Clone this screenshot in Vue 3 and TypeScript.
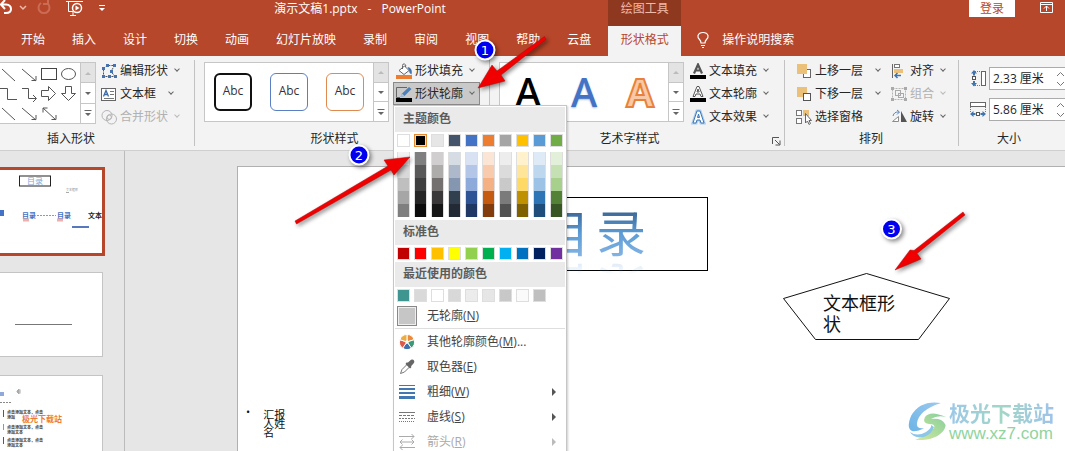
<script setup lang="ts">
import { ref } from 'vue'

interface Cmd { label: string; icon: string; arrow?: boolean; off?: boolean }
interface MenuItem { label: string; key: string; tail?: string; icon: string; sub?: boolean; off?: boolean }

const tabs: string[] = ['开始', '插入', '设计', '切换', '动画', '幻灯片放映', '录制', '审阅', '视图', '帮助', '云盘']

const shapeCmds: Cmd[] = [
  { label: '编辑形状', icon: 'edit', arrow: true },
  { label: '文本框', icon: 'textbox', arrow: true },
  { label: '合并形状', icon: 'merge', arrow: true, off: true },
]
const textCmds: Cmd[] = [
  { label: '文本填充', icon: 'afill', arrow: true },
  { label: '文本轮廓', icon: 'aline', arrow: true },
  { label: '文本效果', icon: 'aglow', arrow: true },
]
const layerCmds: Cmd[] = [
  { label: '上移一层', icon: 'forward', arrow: true },
  { label: '下移一层', icon: 'backward', arrow: true },
  { label: '选择窗格', icon: 'pane' },
]
const arrangeCmds: Cmd[] = [
  { label: '对齐', icon: 'align', arrow: true },
  { label: '组合', icon: 'group', arrow: true, off: true },
  { label: '旋转', icon: 'rotate', arrow: true },
]

const height = ref('2.33 厘米')
const width = ref('5.86 厘米')
const styleBoxes = ['black', 'blue', 'orange']

const scrollers = [
  { label: '向上', d: 'M1 7 4 4 7 7Z' },
  { label: '向下', d: 'M1 4 4 7 7 4Z' },
  { label: '其他', d: 'M.500 2H7.500V3H.500ZM1 5 4 8 7 5Z' },
]

const theme: string[] = ['#ffffff', '#000000', '#e7e6e6', '#44546a', '#4472c4', '#ed7d31', '#a5a5a5', '#ffc000', '#5b9bd5', '#70ad47']
const shades: string[][] = [
  ['#f2f2f2', '#d9d9d9', '#bfbfbf', '#a6a6a6', '#7f7f7f'],
  ['#7f7f7f', '#595959', '#3f3f3f', '#262626', '#0c0c0c'],
  ['#d0cece', '#aeabab', '#757070', '#3a3838', '#171616'],
  ['#d6dce4', '#adb9ca', '#8496b0', '#323f4f', '#222a35'],
  ['#d9e2f3', '#b4c6e7', '#8eaadb', '#2f5496', '#1f3864'],
  ['#fbe5d5', '#f7cbac', '#f4b183', '#c55a11', '#833c0b'],
  ['#ededed', '#dbdbdb', '#c9c9c9', '#7b7b7b', '#525252'],
  ['#fff2cc', '#fee599', '#ffd965', '#bf9000', '#7f6000'],
  ['#deebf6', '#bdd7ee', '#9cc3e5', '#2e75b5', '#1e4e79'],
  ['#e2efd9', '#c5e0b3', '#a8d08d', '#538135', '#375623'],
]
const standard: string[] = ['#c00000', '#ff0000', '#ffc000', '#ffff00', '#92d050', '#00b050', '#00b0f0', '#0070c0', '#002060', '#7030a0']
const recent: string[] = ['#3f9690', '#d9d9d9', '#ffffff', '#d8d8d8', '#ececec', '#e6e6e6', '#c8c8c8', '#fafafa', '#bfbfbf']

const menuItems: MenuItem[] = [
  { label: '其他轮廓颜色', key: 'M', tail: '...', icon: 'wheel' },
  { label: '取色器', key: 'E', icon: 'dropper' },
  { label: '粗细', key: 'W', icon: 'weight', sub: true },
  { label: '虚线', key: 'S', icon: 'dashes', sub: true },
  { label: '箭头', key: 'R', icon: 'arrows', sub: true, off: true },
]

const icons: Record<string, string> = {
  edit: '<path d="M2.5 5.500 6 2.500H13.500L10 8.500 14 13.500H2.500Z" fill="none" stroke="#555" stroke-dasharray="2 1"/><g fill="#4673ad"><rect x="1" y="4" width="3" height="3"/><rect x="5" y="1" width="3" height="3"/><rect x="12" y="1" width="3" height="3"/><rect x="9" y="7" width="3" height="3"/><rect x="13" y="12" width="3" height="3"/><rect x="7" y="12" width="3" height="3"/><rect x="1" y="12" width="3" height="3"/></g>',
  textbox: '<rect x=".5" y="2.500" width="14" height="12" fill="#fff" stroke="#666"/><path d="M2.500 10.500 5 4.500 7.500 10.500M3.500 8.500H6.500" fill="none" stroke="#3c6ba8" stroke-width="1.300"/><path d="M9 5.500H13M9 8.500H13M3 12.500H13" stroke="#777"/>',
  merge: '<circle cx="6" cy="6.500" r="5" fill="none" stroke="#b5b5b5"/><circle cx="10.500" cy="10" r="5" fill="none" stroke="#b5b5b5"/><circle cx="8.200" cy="8.200" r="2.200" fill="none" stroke="#b5b5b5"/>',
  bucket: '<path d="M3 7.500 8.500 3 13 7.500 8 11.500Z" fill="#fff" stroke="#666"/><path d="M6.500 6V2.500Q6.500.5 8.500 1T9.500 4" fill="none" stroke="#666"/><path d="M11.500 4Q17 5 15.500 11.500 13 10.500 13 7.500Z" fill="#3f74b0"/><rect y="12" width="16" height="4" fill="#ed7d31"/>',
  pen: '<path d="M11 1.500H.5V11.500H4" fill="none" stroke="#666"/><path d="M4.500 11 6 7.500 13 1 15.500 3 8.500 10Z" fill="#4c7fb8"/><path d="M4.500 11 6 7.500 8.500 10Z" fill="#a8c4e2"/><rect y="12" width="16" height="4" fill="#000"/>',
  afill: '<path d="M4 10.500 8 1.500 12 10.500M5.500 7.500H10.500" fill="none" stroke="#555" stroke-width="2.200"/><rect y="12" width="16" height="4" fill="#000"/>',
  aline: '<path d="M3 10.500 7 .5H9L13 10.500H11L10 8H6L5 10.500ZM7 6H9.200L8 3Z" fill="#fff" stroke="#555"/><rect y="12" width="16" height="4" fill="#000"/>',
  aglow: '<path d="M3 14 7 2H10L14 14H11L10 11H7L6 14ZM7.500 8.500H9.500L8.500 5Z" fill="#fff" stroke="#a9cbed" stroke-width="3"/><path d="M3 14 7 2H10L14 14H11L10 11H7L6 14ZM7.500 8.500H9.500L8.500 5Z" fill="#fff" stroke="#3f78b5"/>',
  forward: '<rect x="7.500" y="6.500" width="7" height="8" fill="#fff" stroke="#666"/><rect x="1" y="1" width="10" height="10" fill="#ebc17a"/>',
  backward: '<rect x="1" y="1" width="10" height="10" fill="#ebc17a"/><rect x="7.500" y="7.500" width="7" height="7" fill="#fff" stroke="#555"/>',
  pane: '<rect x=".5" y="1.500" width="5" height="5" fill="#fff" stroke="#777"/><rect x=".5" y="9.500" width="5" height="5" fill="#fff" stroke="#777"/><rect x="7" y="1" width="6" height="6" fill="#ebc17a"/><path d="M9.500 4.500V14L11.500 12 13 15.500 14.500 14.500 13 11.500H15.500Z" fill="#fff" stroke="#666"/>',
  align: '<path d="M1.500 1V15" stroke="#666"/><rect x="3.500" y="1.500" width="5" height="3" fill="#fff" stroke="#777"/><rect x="3" y="6" width="9" height="4" fill="#ebc17a"/><path d="M10 12.500H4M6.500 10 4 12.500 6.500 15" fill="none" stroke="#3f74b0" stroke-width="1.500"/>',
  group: '<rect x="1.500" y="2.500" width="13" height="11" fill="none" stroke="#b5b5b5" stroke-dasharray="2 1"/><rect x="4.500" y="4.500" width="5" height="5" fill="none" stroke="#aaa"/><rect x="7.500" y="7.500" width="5" height="4" fill="none" stroke="#aaa"/><g fill="#aaa"><rect y="1" width="3" height="3"/><rect x="13" y="1" width="3" height="3"/><rect y="12" width="3" height="3"/><rect x="13" y="12" width="3" height="3"/></g>',
  rotate: '<path d="M10 2V13H16Z" fill="#555"/><path d="M7.500 7.500V12.500H1.500Z" fill="#fff" stroke="#8c8c8c"/><path d="M2 7Q3 2.500 8 3M6 1 8.500 3 6 5.500" fill="none" stroke="#5b86bd"/>',
  hsize: '<rect x="11.500" y="1.500" width="4" height="14" fill="#fff" stroke="#666"/><path d="M3 1.500H11M3 15.500H11" stroke="#777" stroke-dasharray="1 1"/><rect x="2.500" y="6.500" width="3" height="3" fill="#fff" stroke="#555"/><path d="M4 0 7 3.500H5V5.500H3V3.500H1ZM4 16.500 1 13H3V11H5V13H7Z" fill="#3f74b0"/>',
  wsize: '<rect x=".5" y="1.500" width="15" height="4" fill="#fff" stroke="#666"/><path d="M.5 6V12M15.500 6V12" stroke="#777" stroke-dasharray="1 1"/><rect x="6.500" y="11.500" width="3" height="3" fill="#fff" stroke="#555"/><path d="M0 13 3.500 10V12H5.500V14H3.500V16ZM16 13 12.500 16V14H10.500V12H12.500V10Z" fill="#3f74b0"/>',
  wheel: '<g stroke="#fff"><path d="M8 8V.5A7.500 7.500 0 0 1 15.100 5.700Z" fill="#ed8b3c"/><path d="M8 8 15.100 5.700A7.500 7.500 0 0 1 12.400 14.100Z" fill="#3a9a78"/><path d="M8 8 12.400 14.100A7.500 7.500 0 0 1 3.600 14.100Z" fill="#3f6fad"/><path d="M8 8 3.600 14.100A7.500 7.500 0 0 1 .9 5.700Z" fill="#dd5a49"/><path d="M8 8 .9 5.700A7.500 7.500 0 0 1 8 .5Z" fill="#edac3e"/></g><circle cx="8" cy="8" r="1.800" fill="#fff"/>',
  dropper: '<path d="M1.500 14.500 3 10.500 8.500 5 11 7.500 5.500 13Z" fill="#fff" stroke="#777"/><path d="M7.500 3.500 9 3.500 12 .8Q14 0 15 1.500T14.500 4.500L12.200 7V8.500L11 9.500 6.500 5Z" fill="#666"/>',
  weight: '<path d="M0 1.500H16" stroke="#4377b3"/><path d="M0 5H16" stroke="#4377b3" stroke-width="2"/><path d="M0 9H16" stroke="#4377b3" stroke-width="2"/><path d="M0 13.500H16" stroke="#4377b3" stroke-width="3"/>',
  dashes: '<g stroke="#777"><path d="M0 3.500H16"/><path d="M0 6.500H16" stroke-dasharray="3 1"/><path d="M0 9.500H16" stroke-dasharray="2 1"/><path d="M0 12.500H16" stroke-dasharray="1 1"/></g>',
  arrows: '<path d="M0 2.500H15M12.500 0 15 2.500 12.500 5M1 8H15M3.500 5.500 1 8 3.500 10.500M12.500 5.500 15 8 12.500 10.500M1 13.500H16M3.500 11 1 13.500 3.500 16" fill="none" stroke="#aaa"/>',
}
</script>

<template>
  <div class="app">
    <header class="head">
      <div class="head-left">
        <div class="titlebar">
          <button class="qat" aria-label="撤消"><svg width="14" height="16"><path d="M1 4.500H6Q11 5 11 9T6 13H4M5 0 1 4.500 5 9" fill="none" stroke="#fff" stroke-width="2" /></svg></button>
          <button class="qat" aria-label="撤消列表"><svg width="10" height="16"><path d="M2 6 5 9 8 6" fill="none" stroke="#eab9ac" stroke-width="1.500" /></svg></button>
          <button class="qat redo" aria-label="重做"><svg width="16" height="16"><path d="M5 3A5.500 5.500 0 1 0 11 3M12 0V4H7" fill="none" stroke="#cc6b54" stroke-width="2" /></svg></button>
          <button class="qat show" aria-label="从头开始"><svg width="18" height="18"><path d="M0 1.500H17M2.500 2V11.500H7M7 11.500V15M4 15.500H10" fill="none" stroke="#fff" /><circle cx="11" cy="8" r="4.500" fill="#b7472a" stroke="#fff" stroke-width="1.500" /><path d="M9.500 5.500V10.500L13.500 8Z" fill="#fff" /></svg></button>
          <button class="qat more" aria-label="自定义"><svg width="8" height="16"><path d="M1 5.500H7" stroke="#fff" /><path d="M1 8H7L4 11Z" fill="#fff" /></svg></button>
          <span class="doc"><span>演示文稿1.pptx</span><span>-</span><span>PowerPoint</span></span>
        </div>
        <nav class="tabs"><button v-for="t in tabs" :key="t" class="tab">{{ t }}</button></nav>
      </div>
      <div class="context">
        <div class="context-name">绘图工具</div>
        <button class="tab current">形状格式</button>
      </div>
      <div class="head-right">
        <div class="account">
          <button class="login">登录</button>
          <button class="qat" aria-label="功能区显示选项"><svg width="14" height="13"><path d="M.5 2.500H12.500V12.500H.5ZM.5 4.500H12.500M6.500 11V6M4 8.500 6.500 6 9 8.500" fill="none" stroke="#fff" /></svg></button>
        </div>
        <button class="tell"><svg width="14" height="18"><path d="M5 12Q5 10 3.500 8.500 1.500 6.500 2 4.500 3 1.500 7 1.500T12 4.500Q12.500 6.500 10.500 8.500 9 10 9 12ZM5 14.500H9M6 16.500H8" fill="none" stroke="#fff" stroke-width="1.200" /></svg>操作说明搜索</button>
      </div>
    </header>

    <section class="ribbon">
      <div class="group shapes">
        <div class="body">
          <div class="gallery tall">
            <svg class="shape-set" width="80" height="59" fill="none" stroke="#555">
              <path d="M2 6 15 18M22 6 36 18M31.500 17.500H36V13M0 25.500H7.500V36.500H17M22 25.500H28.500V35.500H36M33 32 36.500 35.500 33 39M2 45 15 57M22 45 36 57M31.500 56.500H36V52M43 45 56 57M51.500 56.500H56V52M43 49.500V45H47.500" />
              <rect x="41.500" y="5.500" width="15" height="11" stroke="#444" /><ellipse cx="68.500" cy="11" rx="7" ry="5.500" />
              <path d="M41.500 27.500H48.500V23.500L55.500 30.500 48.500 37.500V33.500H41.500ZM65.500 23.500H71.500V30.500H75.500L68.500 37.500 61.500 30.500H65.500Z" />
            </svg>
            <div class="scroll"><button v-for="s in scrollers" :key="s.label" :aria-label="s.label"><svg width="8" height="10"><path :d="s.d" /></svg></button></div>
          </div>
          <div class="cmds">
            <button v-for="c in shapeCmds" :key="c.label" class="cmd" :class="{ off: c.off }">
              <svg width="16" height="16" v-html="icons[c.icon]"></svg><span>{{ c.label }}</span><i class="chev"></i>
            </button>
          </div>
        </div>
        <div class="name">插入形状</div>
      </div>

      <div class="group styles">
        <div class="body">
          <div class="gallery">
            <div class="cells"><button v-for="s in styleBoxes" :key="s" class="cell"><span class="abc" :class="s">Abc</span></button></div>
            <div class="scroll"><button v-for="s in scrollers" :key="s.label" :aria-label="s.label"><svg width="8" height="10"><path :d="s.d" /></svg></button></div>
          </div>
          <div class="cmds snug">
            <button class="cmd"><svg width="16" height="16" v-html="icons.bucket"></svg><span>形状填充</span><i class="chev"></i></button>
            <div class="drop">
              <button class="cmd pressed" aria-expanded="true"><svg width="16" height="16" v-html="icons.pen"></svg><span>形状轮廓</span><i class="chev"></i></button>
              <div class="menu">
                <h3 class="menu-head">主题颜色</h3>
                <div class="swatches"><button v-for="(c, i) in theme" :key="c" class="sw" :class="{ picked: i === 1 }" :style="{ background: c }" :aria-label="c"></button></div>
                <div class="swatches shade-row">
                  <div v-for="(col, i) in shades" :key="i" class="shade-col"><button v-for="c in col" :key="c" class="shade" :style="{ background: c }" :aria-label="c"></button></div>
                </div>
                <h3 class="menu-head">标准色</h3>
                <div class="swatches"><button v-for="c in standard" :key="c" class="sw" :style="{ background: c }" :aria-label="c"></button></div>
                <h3 class="menu-head">最近使用的颜色</h3>
                <div class="swatches"><button v-for="c in recent" :key="c" class="sw" :style="{ background: c }" :aria-label="c"></button></div>
                <button class="item none"><span class="none-box"></span><span>无轮廓(<u>N</u>)</span></button>
                <button v-for="m in menuItems" :key="m.key" class="item" :class="{ off: m.off }">
                  <svg width="16" height="16" v-html="icons[m.icon]"></svg><span>{{ m.label }}(<u>{{ m.key }}</u>){{ m.tail }}</span><i v-if="m.sub" class="sub"></i>
                </button>
              </div>
            </div>
          </div>
        </div>
        <div class="name">形状样式</div>
      </div>

      <div class="group art">
        <div class="body">
          <div class="gallery">
            <div class="cells"><button class="cell letter">A</button><button class="cell letter blue-a">A</button><button class="cell letter orange-a">A</button></div>
            <div class="scroll"><button v-for="s in scrollers" :key="s.label" :aria-label="s.label"><svg width="8" height="10"><path :d="s.d" /></svg></button></div>
          </div>
          <div class="cmds">
            <button v-for="c in textCmds" :key="c.label" class="cmd" :class="{ off: c.off }">
              <svg width="16" height="16" v-html="icons[c.icon]"></svg><span>{{ c.label }}</span><i class="chev"></i>
            </button>
          </div>
        </div>
        <div class="name">艺术字样式</div>
        <button class="launch" aria-label="设置文本效果格式"><svg width="9" height="9"><path d="M.5 7V.5H7M3 3 7.500 7.500M8 3.500V8H3.500" fill="none" stroke="#555" /></svg></button>
      </div>

      <div class="group arrange">
        <div class="body">
          <div class="cmds layers">
            <button v-for="c in layerCmds" :key="c.label" class="cmd">
              <svg width="16" height="16" v-html="icons[c.icon]"></svg><span>{{ c.label }}</span><i v-if="c.arrow" class="chev"></i>
            </button>
          </div>
          <div class="cmds">
            <button v-for="c in arrangeCmds" :key="c.label" class="cmd" :class="{ off: c.off }">
              <svg width="16" height="16" v-html="icons[c.icon]"></svg><span>{{ c.label }}</span><i class="chev"></i>
            </button>
          </div>
        </div>
        <div class="name">排列</div>
      </div>

      <div class="group size">
        <div class="body sizes">
          <label class="field"><svg width="17" height="17" v-html="icons.hsize"></svg><span class="spin"><input v-model="height" aria-label="形状高度"><svg width="9" height="18"><path d="M1 6 4.500 2.500 8 6M1 12 4.500 15.500 8 12" fill="none" stroke="#777" /></svg></span></label>
          <label class="field"><svg width="17" height="17" v-html="icons.wsize"></svg><span class="spin"><input v-model="width" aria-label="形状宽度"><svg width="9" height="18"><path d="M1 6 4.500 2.500 8 6M1 12 4.500 15.500 8 12" fill="none" stroke="#777" /></svg></span></label>
        </div>
        <div class="name">大小</div>
      </div>
    </section>

    <main class="work">
      <aside class="thumbs">
        <div class="thumb active">
          <svg width="102" height="83">
            <rect x="19.500" y="6" width="31" height="10" fill="#fff" stroke="#222" /><text x="27" y="14" font-size="8" fill="#7aa7d6">目录</text>
            <text x="66" y="21" font-size="3" fill="#888">文本框形</text><path d="M66 22.500H69" stroke="#aaa" />
            <rect y="40" width="4" height="6" fill="#4472c4" />
            <text x="22" y="48" font-size="7" font-weight="700" fill="#4472c4">目录</text><path d="M37 45.500H56" stroke="#999" stroke-dasharray="2 1" />
            <text x="57" y="48" font-size="7" font-weight="700" fill="#4472c4">目录</text>
            <path d="M23 50H29M57 50H63" stroke="#efb0ac" stroke-width="3" />
            <text x="88" y="48" font-size="7" font-weight="700" fill="#222">文本</text>
            <path d="M72 57H89" stroke="#5878bd" stroke-width="2" />
          </svg>
        </div>
        <div class="thumb"><svg width="102" height="83"><path d="M15 51.500H72" stroke="#777" /></svg></div>
        <div class="thumb">
          <svg width="102" height="83">
            <rect y="16" width="4" height="4" fill="#8ea9da" /><path d="M17 15 19 13V18L17 16ZM20 13.500V17.500" fill="#aaa" stroke="#aaa" /><path d="M0 26.500H12" stroke="#888" stroke-dasharray="2 1" />
            <path d="M3.500 34V41M3.500 61V68" stroke="#3c5a9c" /><path d="M3.500 48V54" stroke="#ed7d31" />
            <g font-size="4" font-weight="700" fill="#333"><text x="7" y="38">点击添加文本，点击</text><text x="7" y="43">添加</text><text x="7" y="53">点击添加文本，点击</text><text x="7" y="58">添加文本</text><text x="7" y="66">点击添加文本，点击</text><text x="7" y="71">添加文本</text></g>
            <text x="22" y="46" font-size="8" font-weight="700" fill="#ed7d31">极光下载站</text>
          </svg>
        </div>
      </aside>
      <div class="stage">
        <div class="slide">
          <div class="heading"><div class="big"><span>目</span><span>录</span></div></div>
          <div class="reporter"><span class="dot">•</span><span class="who">汇报人姓名</span></div>
          <div class="penta">
            <svg width="168" height="68"><path d="M83.500.5 166.500 25.500 135.500 66.500H32.500L.5 25.500Z" fill="#fff" stroke="#111" /></svg>
            <p>文本框形状</p>
          </div>
        </div>
      </div>
      <div class="mark">
        <svg width="42" height="42">
          <defs>
            <linearGradient id="swirlBlue" x1="0" y1="1" x2="1" y2="0"><stop offset="0" stop-color="#6cb4e6" /><stop offset="1" stop-color="#9cc9ee" /></linearGradient>
            <linearGradient id="swirlGreen" x1="0" y1="1" x2="1" y2="0"><stop offset="0" stop-color="#d5e89c" /><stop offset="1" stop-color="#84cf9d" /></linearGradient>
          </defs>
          <path d="M34 2Q13-1 4 15Q-1 27 5 30Q10 31 17 27Q9 28 10 22Q12 9 34 2Z" fill="url(#swirlBlue)" />
          <path d="M39 16Q23 9 18 16Q15 22 22 23Q29 23 27 27Q22 34 8 39Q29 40 37 29Q41 23 34 19Q30 17 24 18Q30 14 39 16Z" fill="url(#swirlGreen)" />
          <path d="M3 31Q10 36 19 31 25 27 24 24L27 26Q25 33 17 36 7 38 3 31Z" fill="#8cc6e8" />
        </svg>
        <div class="mark-text"><strong>极光下载站</strong><span>www.xz7.com</span></div>
      </div>
    </main>

    <svg class="callouts" width="1" height="1">
      <g class="lift">
        <g fill="#f00000" stroke="#a80c0c" stroke-width=".5">
          <path d="M544.500 36.500 546 39.500 501 75 505 81 478 88 492 65 497 71Z" />
          <path d="M295 221 296.500 224 391 170 394 175 410 157 384 160 388 166Z" />
          <path d="M963 212 965 215 917 253.500 921 259 895 270 910 250 914 250.500Z" />
        </g>
        <g fill="#0000f0" stroke="#fff" stroke-width="2"><circle cx="485" cy="50" r="9.500" /><circle cx="359" cy="155" r="9.500" /><circle cx="891.500" cy="229" r="9.500" /></g>
      </g>
      <g class="digits" text-anchor="middle"><text x="485" y="55">1</text><text x="359" y="160">2</text><text x="891.500" y="234">3</text></g>
    </svg>
  </div>
</template>

<style>
html, body { margin: 0; overflow: hidden; }
</style>

<style scoped>
.app { position: relative; display: flex; flex-direction: column; height: 100vh; overflow: hidden; background: #e6e6e6; color: #262626; font: 12px/18px "Open Sans", "Noto Sans CJK SC", sans-serif; }
.app * { box-sizing: border-box; }
button { display: block; padding: 0; border: 0; background: none; color: inherit; font: inherit; white-space: nowrap; }
svg { display: block; flex: none; }

.head { display: flex; flex: none; height: 56px; background: #b7472a; color: #fff; }
.head-left { padding-right: 2px; }
.titlebar { display: flex; align-items: flex-start; height: 26px; }
.qat + .qat { margin-left: 4px; }
.titlebar .redo { margin-left: 8px; }
.titlebar .show { margin-left: 14px; }
.titlebar .more { margin-left: 14px; }
.doc { display: flex; gap: 10px; margin: 0 auto; padding-left: 8px; }
.tabs { display: flex; gap: 3px; padding: 0 3px 0 9px; }
.tab { height: 30px; padding: 0 12px 2px; }
.context { flex: none; width: 73px; }
.context-name { height: 26px; background: #8f3820; color: #f0b9a9; text-align: center; }
.tab.current { width: 100%; background: #f3f3f3; color: #b7472a; }
.head-right { flex: 1; }
.account { display: flex; align-items: flex-start; justify-content: flex-end; gap: 25px; height: 26px; padding-right: 11px; }
.login { width: 46px; height: 17px; background: #fff; color: #b7472a; line-height: 16px; }
.tell { display: flex; align-items: center; gap: 12px; height: 30px; padding: 0 0 2px 15px; }

.ribbon { position: relative; z-index: 2; display: grid; grid-template-columns: 195px 295px 295px 174px 1fr; flex: none; height: 95px; background: #f3f3f3; border-bottom: 1px solid #cfcfcf; }
.group { position: relative; min-width: 0; padding-top: 3px; }
.group:not(:last-child)::after { content: ""; position: absolute; top: 4px; right: 0; bottom: 4px; width: 1px; background: #c2c2c2; }
.body { display: flex; height: 70px; }
.styles .body, .art .body { padding-left: 9px; }
.name { padding-right: 16px; text-align: center; line-height: 20px; }
.shapes .name { padding-right: 53px; }
.arrange .name { padding-right: 2px; }
.size .name { padding-right: 6px; }
.launch { position: absolute; right: 4px; bottom: 4px; }

.gallery { display: flex; flex: none; height: 60px; margin-top: 3px; border: 1px solid #c6c6c6; background: #fff; }
.gallery.tall { height: 62px; border-left: 0; }
.scroll { display: flex; flex-direction: column; width: 15px; border-left: 1px solid #c6c6c6; fill: #666; }
.scroll button { display: flex; flex: 1; align-items: center; justify-content: center; min-height: 0; border-top: 1px solid #c6c6c6; }
.scroll button:first-child { border-top: 0; background: #e3e3e3; fill: #bbb; }
.cells { display: flex; }
.cell { display: flex; align-items: center; justify-content: center; width: 56px; }
.abc { width: 38px; height: 38px; border: 1px solid #111; border-radius: 6px; color: #333; line-height: 33px; }
.abc.black { border-width: 2px; line-height: 31px; }
.abc.blue { border-color: #5b7fc4; }
.abc.orange { border-color: #e08a50; }
.letter { color: #000; font: 500 40px/60px "Noto Sans", sans-serif; }
.blue-a { color: #4472c4; text-shadow: 0 1px 2px #a9bfe6; }
.orange-a { color: #f8c9a4; font-weight: 700; -webkit-text-stroke: 2px #e9813a; }

.cmds { display: flex; flex-direction: column; padding-left: 6px; }
.shapes .cmds { padding-left: 5px; }
.shapes .cmd span { min-width: 42px; text-align: left; }
.cmds.snug { padding-left: 4px; }
.snug .cmd { width: 87px; padding-left: 3px; }
.cmd { display: flex; align-items: center; gap: 3px; height: 23px; }
.cmd.pressed { border: 1px solid #8a8a8a; background: #c9c9c9; padding-left: 2px; }
.cmd.off { color: #b1b1b1; }
.chev { width: 4px; height: 4px; margin: -3px 0 0 4px; border: solid #666; border-width: 0 1px 1px 0; transform: rotate(45deg); }
.off .chev { border-color: #bbb; }
.layers { width: 106px; padding-left: 11px; }
.layers .chev { margin-left: 10px; }
.arrange .cmds:last-child { padding-left: 0; }
.sizes { flex-direction: column; gap: 8px; padding: 8px 0 0 11px; }
.field { display: flex; align-items: center; gap: 2px; }
.spin { display: flex; align-items: center; width: 78px; height: 23px; border: 1px solid #ababab; background: #fff; }
.spin input { width: 66px; padding: 0 0 0 3px; border: 0; outline: 0; background: none; color: #262626; font: inherit; }

.drop { position: relative; }
.menu { position: absolute; top: 23px; left: 0; z-index: 3; width: 174px; padding: 1px; border: 1px solid #c6c6c6; background: #fff; box-shadow: 1px 1px 2px #0003; }
.styles { z-index: 3; }
.menu-head { height: 25px; margin: 0; padding-left: 8px; background: #eaeaea; color: #5c5c5c; font-size: 12px; font-weight: 700; line-height: 24px; }
.swatches { display: flex; gap: 4px; padding: 2px; }
.sw { width: 13px; height: 13px; border: 1px solid #dedede; }
.sw.picked { border-color: #e58a2e; box-shadow: inset 0 0 0 1px #f8dcae; }
.shade-row { padding: 3px 2px; }
.shade-col { width: 13px; border: solid #dedede; border-width: 0 1px; }
.shade { width: 11px; height: 13px; }
.item { display: flex; align-items: center; gap: 12px; width: 100%; height: 25px; padding-left: 4px; color: #444; }
.item.off { color: #aaa; }
.item.none { gap: 10px; height: 25px; padding-left: 2px; border-bottom: 1px solid #dedede; }
.none-box { width: 20px; height: 20px; border: 1px solid #888; background: #c6c6c6; box-shadow: inset 0 0 0 1px #eee; }
.sub { margin: 0 9px 0 auto; border: solid transparent; border-width: 4px 0 4px 4px; border-left-color: #555; }
.off .sub { border-left-color: #bbb; }

.work { position: relative; display: flex; flex: 1; min-height: 0; overflow: hidden; }
.thumbs { display: flex; flex: none; flex-direction: column; gap: 20px; width: 125px; padding-top: 19px; border-right: 1px solid #bcbcbc; }
.thumb { flex: none; width: 102px; height: 83px; background: #fff; box-shadow: 0 0 0 1px #c4c4c4; overflow: hidden; }
.thumb.active { box-shadow: 0 0 0 3px #b7472a; }
.stage { flex: 1; padding: 15px 0 0 112px; }
.slide { position: relative; height: 100%; border: solid #b0b0b0; border-width: 1px 0 0 1px; background: #fff; }
.heading { position: absolute; left: 212px; top: 30px; display: flex; width: 258px; height: 74px; border: 1px solid #000; }
.big { display: flex; gap: 6px; margin-left: 89px; font-size: 50px; font-weight: 400; line-height: 70px; }
.big span { height: 70px; background: linear-gradient(#37608e 15%, #5b9bd5 50%, #85b5e3 85%); background-clip: text; color: transparent; -webkit-box-reflect: below -16px linear-gradient(transparent 68%, #0008); }
.reporter { position: absolute; left: 8px; top: 240px; display: flex; gap: 13px; font-size: 11px; line-height: 9px; color: #111; }
.who { width: 22px; margin-top: 3px; word-break: break-all; }
.penta { position: absolute; left: 545px; top: 106px; }
.penta p { position: absolute; left: 40px; top: 20px; width: 74px; margin: 0; color: #111; font-size: 18px; line-height: 21px; }
.mark { position: absolute; right: 11px; bottom: 8px; display: flex; align-items: center; }
.mark-text { display: flex; flex-direction: column; }
.mark strong { background: linear-gradient(90deg, #9cc8e8, #a2d6c6, #9ec3ea); background-clip: text; color: transparent; font-size: 21px; font-weight: 700; line-height: 24px; }
.mark-text span { color: #90d4a0; font: 17px/18px "Liberation Sans", sans-serif; }
.callouts { position: absolute; left: 0; top: 0; z-index: 5; overflow: visible; pointer-events: none; }
.lift { filter: drop-shadow(2px 2px 2px #0007); }
.digits { fill: #fff; font: 13px "DejaVu Sans", sans-serif; }
</style>
